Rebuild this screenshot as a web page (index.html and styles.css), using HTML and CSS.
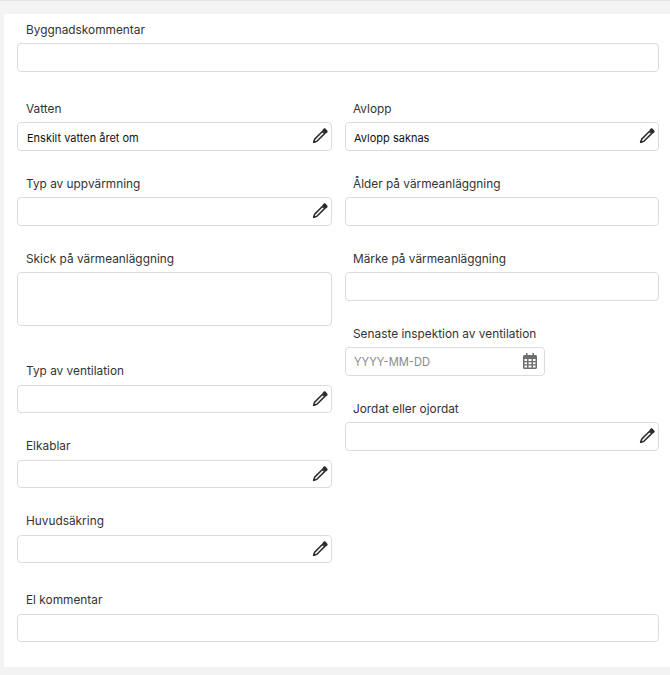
FILE: index.html
```html
<!DOCTYPE html>
<html lang="en">
<head>
    <meta charset="UTF-8">
    <meta name="viewport" content="width=device-width, initial-scale=1.0">
    <title>Byggnad</title>
    <link rel="stylesheet" href="styles.css">
</head>
<body>
    <svg class="defs" width="0" height="0">
        <symbol id="pencil" viewBox="0 0 16 16">
            <path d="M10.6 3.2 2.7 11.1 1.6 14.4 4.9 13.3 12.8 5.4Z" fill="none" stroke="currentColor" stroke-width="1.5" stroke-linejoin="round"/>
            <path d="M10.2 2.200 11.600 .8C12.200 .2 13 .2 13.600 .8L15.200 2.400C15.800 3 15.800 3.800 15.200 4.400L13.800 5.800Z" fill="currentColor"/>
            <path d="M1 15 1.700 12.400 3.600 14.300Z" fill="currentColor"/>
        </symbol>
        <symbol id="calendar" viewBox="0 0 14 16">
            <path d="M3 0H4.500V2H9.500V0H11V2H12.500C13.300 2 14 2.700 14 3.500V14.500C14 15.300 13.300 16 12.500 16H1.500C.7 16 0 15.300 0 14.500V3.500C0 2.700 .7 2 1.500 2H3ZM1.500 6V8H4V6ZM5.500 6V8H8.500V6ZM10 6V8H12.500V6ZM1.500 9.200V11.200H4V9.200ZM5.500 9.200V11.200H8.500V9.200ZM10 9.200V11.200H12.500V9.200ZM1.500 12.400V14.500H4V12.400ZM5.500 12.400V14.500H8.500V12.400ZM10 12.400V14.500H12.500V12.400Z" fill="currentColor" fill-rule="evenodd"/>
        </symbol>
    </svg>

    <form class="card">
        <div class="field field-wide">
            <label>Byggnadskommentar</label>
            <div class="box"></div>
        </div>

        <div class="columns">
            <div class="column">
                <div class="field">
                    <label>Vatten</label>
                    <div class="box">
                        <span class="value">Enskilt vatten året om</span>
                        <svg class="icon"><use href="#pencil"/></svg>
                    </div>
                </div>
                <div class="field">
                    <label>Typ av uppvärmning</label>
                    <div class="box">
                        <span class="value"></span>
                        <svg class="icon"><use href="#pencil"/></svg>
                    </div>
                </div>
                <div class="field field-area">
                    <label>Skick på värmeanläggning</label>
                    <div class="box box-area"></div>
                </div>
                <div class="field">
                    <label>Typ av ventilation</label>
                    <div class="box">
                        <span class="value"></span>
                        <svg class="icon"><use href="#pencil"/></svg>
                    </div>
                </div>
                <div class="field">
                    <label>Elkablar</label>
                    <div class="box">
                        <span class="value"></span>
                        <svg class="icon"><use href="#pencil"/></svg>
                    </div>
                </div>
                <div class="field">
                    <label>Huvudsäkring</label>
                    <div class="box">
                        <span class="value"></span>
                        <svg class="icon"><use href="#pencil"/></svg>
                    </div>
                </div>
            </div>

            <div class="column column-right">
                <div class="field">
                    <label>Avlopp</label>
                    <div class="box">
                        <span class="value">Avlopp saknas</span>
                        <svg class="icon"><use href="#pencil"/></svg>
                    </div>
                </div>
                <div class="field">
                    <label>Ålder på värmeanläggning</label>
                    <div class="box"></div>
                </div>
                <div class="field">
                    <label>Märke på värmeanläggning</label>
                    <div class="box"></div>
                </div>
                <div class="field">
                    <label>Senaste inspektion av ventilation</label>
                    <div class="box box-date">
                        <span class="placeholder">YYYY-MM-DD</span>
                        <svg class="icon icon-date"><use href="#calendar"/></svg>
                    </div>
                </div>
                <div class="field">
                    <label>Jordat eller ojordat</label>
                    <div class="box">
                        <span class="value"></span>
                        <svg class="icon"><use href="#pencil"/></svg>
                    </div>
                </div>
            </div>
        </div>

        <div class="field field-wide field-last">
            <label>El kommentar</label>
            <div class="box"></div>
        </div>
    </form>
</body>
</html>
```

FILE: styles.css
```css
* {
    box-sizing: border-box;
}

body {
    margin: 0;
    height: 675px;
    padding: 14px 0 8px 4px;
    background: #f3f3f3;
    border-top: 1px solid #e4e4e4;
    font-family: Inter, "Liberation Sans", sans-serif;
    overflow: hidden;
}

.defs {
    position: absolute;
}

.card {
    height: 653px;
    margin-top: -1px;
    padding: 8px 11px 0 13px;
    background: #fff;
}

.columns {
    display: flex;
    gap: 13px;
    margin-top: 29.4px;
}

.column {
    width: 315px;
}

.column-right {
    width: 314px;
}

.field {
    margin-bottom: 25.4px;
}

.field-wide {
    margin-bottom: 0;
}

.columns + .field-wide {
    margin-top: 29px;
}

.field-area {
    margin-bottom: 37px;
}

.field-area ~ .field {
    margin-bottom: 24.8px;
}

.field-area ~ .field label,
.field-last label {
    height: 21.6px;
}

.column .field:last-child {
    margin-bottom: 0;
}

label {
    display: block;
    height: 21px;
    padding-left: 9px;
    color: #333;
    font-size: 11.85px;
    line-height: 16px;
}

.column-right label {
    padding-left: 8px;
}

.box {
    display: flex;
    align-items: center;
    justify-content: space-between;
    height: 28.6px;
    padding: 0 3px 0 9px;
    background: #fff;
    border: 1px solid #dcdcdc;
    border-radius: 4px;
}

.column-right .box {
    padding-left: 8px;
}

.box-area {
    height: 54px;
}

.column-right .box-date {
    width: 200px;
    padding: 0 7px 0 8px;
}

.value {
    padding-top: 4px;
    color: #111;
    font-size: 11px;
}

.placeholder {
    padding-top: 2px;
    color: #8a8a8a;
    font-size: 11.2px;
}

.icon {
    width: 16px;
    height: 16px;
    color: #2b2b2b;
}

.icon-date {
    width: 14px;
    color: #6e6e6e;
}
```
